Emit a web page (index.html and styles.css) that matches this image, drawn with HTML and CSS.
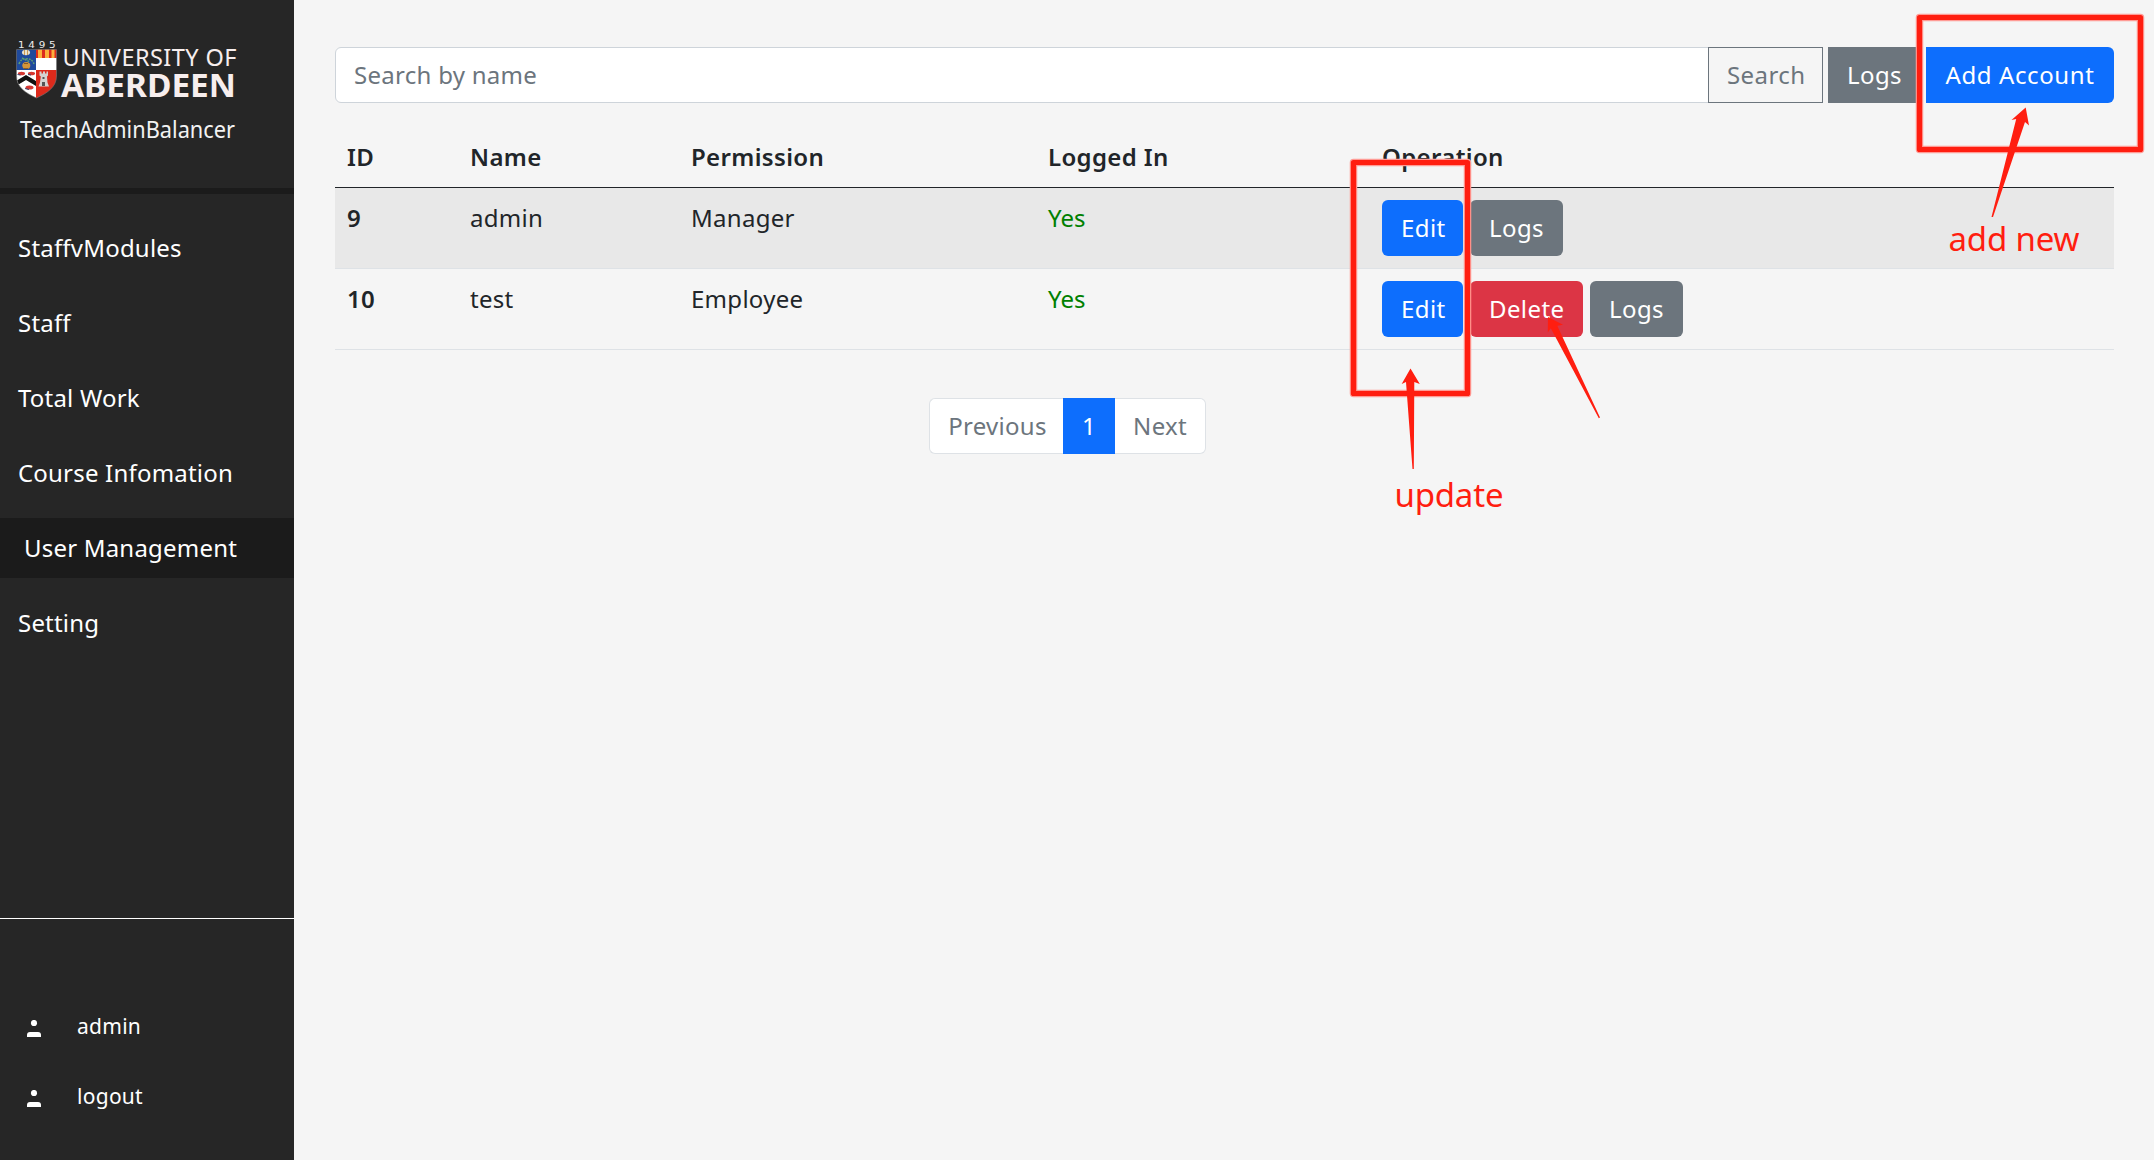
FILE: index.html
```html
<!DOCTYPE html>
<html lang="en">
<head>
<meta charset="utf-8">
<title>TeachAdminBalancer</title>
<link rel="stylesheet" href="styles.css">
</head>
<body>
<div class="app">
  <aside class="sidebar">
    <header class="brand">
      <svg class="logo" width="294" height="188" viewBox="0 0 294 188">
        <defs>
          <clipPath id="shield"><path d="M16.5 49.5h40V76c0 11-9 17-20 22-11-5-20-11-20-22z"/></clipPath>
        </defs>
        <g clip-path="url(#shield)">
          <path fill="#1f4a9c" d="M16 49h20v21H16z"/>
          <path fill="#dc2a1c" d="M36 49h21v9H36z"/>
          <path fill="#fbb03b" d="M38 49h4v9h-4zM45 49h4v9h-4zM51.500 49h3v9h-3z"/>
          <path fill="#fff" d="M36 58h21v12H36zM16 70h20v29H16z"/>
          <path fill="#dc2a1c" d="M36 70h21v29H36z"/>
          <path fill="#111" d="M16 81l10-6 10 6v5l-10-6-10 6z"/>
          <ellipse cx="26" cy="52.500" rx="4" ry="2.800" fill="#e9e2cf"/>
          <path fill="#c89a55" d="M24 50h1v5h-1zM27 50h1v5h-1z"/>
          <path d="M19 64q2-6 7-5 6-1 8 5M22 58l8 4" fill="none" stroke="#5d9c74" stroke-width="1.500" stroke-dasharray="2 1"/>
          <ellipse cx="26.300" cy="65.500" rx="4" ry="3.500" fill="#d4953a"/>
          <path fill="#8a5a22" d="M24 63h4v1h-4zM24 68h4v1h-4z"/>
          <g fill="#d53832"><ellipse cx="21.500" cy="73.500" rx="3.600" ry="1.800"/><ellipse cx="31.500" cy="73.500" rx="3.600" ry="1.800"/><ellipse cx="29.500" cy="87.500" rx="4" ry="2"/></g>
          <path d="M17.500 74.500l3 .5M28 74.500l3 .5M25 88.500l4 1" stroke="#35456f"/>
          <path fill="#d4d2d0" d="M39.500 71.500h2v2h1.500v-2h2v2H46.500v-2h1.500v4l-1 1 .5 6 1.500 4H38.500l1.500-4 .8-6-1.300-1z"/>
          <path fill="#555" d="M42.500 77h2v2h-2zM42 82h3v4h-3z"/>
        </g>
        <path d="M16.500 49.500h40V76c0 11-9 17-20 22-11-5-20-11-20-22z" fill="none" stroke="#777" stroke-width=".6"/>
        <text class="logo-year" transform="translate(18 47.800) scale(1.300 1)" x="0" y="0" textLength="29">1495</text>
        <text class="logo-top" x="62.500" y="66" textLength="174">UNIVERSITY OF</text>
        <text class="logo-name" x="61" y="97" textLength="175" lengthAdjust="spacingAndGlyphs">ABERDEEN</text>
        <text class="logo-app" x="20" y="138" textLength="215" lengthAdjust="spacingAndGlyphs">TeachAdminBalancer</text>
      </svg>
    </header>
    <nav class="nav">
      <a class="nav-item">StaffvModules</a>
      <a class="nav-item">Staff</a>
      <a class="nav-item">Total Work</a>
      <a class="nav-item">Course Infomation</a>
      <a class="nav-item active">User Management</a>
      <a class="nav-item">Setting</a>
    </nav>
    <footer class="account">
      <a class="account-item"><svg width="14" height="17" viewBox="0 0 14 17" fill="#fff"><circle cx="7" cy="3" r="3.100"/><path d="M0 17v-2q0-3 3-3h8q3 0 3 3v2z"/></svg>admin</a>
      <a class="account-item"><svg width="14" height="17" viewBox="0 0 14 17" fill="#fff"><circle cx="7" cy="3" r="3.100"/><path d="M0 17v-2q0-3 3-3h8q3 0 3 3v2z"/></svg>logout</a>
    </footer>
  </aside>
  <main class="content">
    <div class="toolbar">
      <input class="search" type="text" placeholder="Search by name">
      <button class="btn outline">Search</button>
      <button class="btn gray square">Logs</button>
      <button class="btn blue end">Add Account</button>
    </div>
    <table class="users">
      <colgroup><col class="c-id"><col class="c-name"><col class="c-perm"><col class="c-login"><col></colgroup>
      <thead><tr><th>ID</th><th>Name</th><th>Permission</th><th>Logged In</th><th>Operation</th></tr></thead>
      <tbody>
        <tr class="striped"><th>9</th><td>admin</td><td>Manager</td><td class="yes">Yes</td><td><div class="ops"><button class="btn blue edit">Edit</button><button class="btn gray logs">Logs</button></div></td></tr>
        <tr><th>10</th><td>test</td><td>Employee</td><td class="yes">Yes</td><td><div class="ops"><button class="btn blue edit">Edit</button><button class="btn red">Delete</button><button class="btn gray logs">Logs</button></div></td></tr>
      </tbody>
    </table>
    <div class="pagination"><a class="page prev">Previous</a><a class="page current">1</a><a class="page next">Next</a></div>
  </main>
</div>
<svg class="notes" width="2154" height="1160" viewBox="0 0 2154 1160">
  <g fill="none" stroke-linejoin="round">
    <path class="halo" d="M1919.500 17.500h221v132h-221zM1353.500 162.500h114v231h-114z"/>
    <path class="frame" d="M1919.500 17.500h221v132h-221zM1353.500 162.500h114v231h-114z"/>
  </g>
  <g fill="#ff1e10">
    <path d="M2025.700 107.500l3.300 18-4-3.500-32 95h-1.500l24.700-98-4.700 1z"/>
    <path d="M1410.500 368.500l9.300 15.500-5.500-2-.5 87h-1.300l-6.500-87-4.300 2z"/>
    <path d="M1548 317l15 7.800-5.700 1 42.700 91.800-1.200.6-48-90-3 4.300z"/>
    <text class="note" x="1948.500" y="250.500" textLength="131">add new</text>
    <text class="note" x="1394.500" y="507" textLength="109">update</text>
  </g>
</svg>
</body>
</html>
```
FILE: styles.css
```css
* { box-sizing: border-box; }
body {
  margin: 0;
  background: #f5f5f5;
  color: #212529;
  font: 24px/36px "Noto Sans", "Open Sans", sans-serif;
  letter-spacing: .28px;
}
.app { display: flex; height: 1160px; overflow: hidden; }

.sidebar {
  width: 294px;
  flex: none;
  display: flex;
  flex-direction: column;
  background: #262626;
  color: #fff;
}
.brand { height: 194px; border-bottom: 6px solid #1b1b1b; }
.logo { display: block; letter-spacing: 0; }
.logo-year { font: 8px "DejaVu Sans", sans-serif; fill: #eee; }
.logo-top { font: 23.500px "Noto Sans", sans-serif; fill: #f7eeee; }
.logo-name { font: bold 32px "Noto Sans", sans-serif; fill: #f7eeee; }
.logo-app { font: 23px "Noto Sans", sans-serif; fill: #f2f2f2; }
.nav { display: flex; flex-direction: column; gap: 15px; padding-top: 24px; letter-spacing: .2px; }
.nav-item { height: 60px; padding: 12px 18px; white-space: nowrap; }
.nav-item.active { padding-left: 24px; background: #1b1b1b; }
.account {
  height: 242px;
  margin-top: auto;
  padding-top: 89px;
  border-top: 1px solid #fff;
  font-size: 21px;
}
.account-item { display: flex; align-items: center; height: 36px; gap: 36px; margin-bottom: 34px; padding-left: 27px; }
.account-item svg { margin-top: 4px; }

.content { flex: 1; padding: 47px 40px 0 41px; }
.toolbar { display: flex; height: 56px; }
.search {
  width: 1374px;
  padding: 0 18px;
  border: 1px solid #ced4da;
  border-radius: 6px 0 0 6px;
  background: #fff;
  font: inherit;
  letter-spacing: inherit;
}
.search::placeholder { color: #6c757d; opacity: 1; }
.btn {
  height: 56px;
  padding: 9px 18px;
  border: 1px solid transparent;
  border-radius: 6px;
  color: #fff;
  font: inherit;
  letter-spacing: .4px;
  white-space: nowrap;
}
.outline { width: 115px; margin-left: -1px; border-color: #6c757d; border-radius: 0; background: transparent; color: #6c757d; }
.blue { background: #0d6efd; }
.gray { background: #6c757d; }
.red { width: 113px; background: #dc3545; }
.square { width: 93px; margin-left: 5px; border-radius: 0; }
.end { flex: 1; margin-left: 5px; border-radius: 0 6px 6px 0; letter-spacing: .6px; }

.users { width: 1779px; margin-top: 24px; border-collapse: separate; border-spacing: 0; table-layout: fixed; }
.c-id { width: 123px; }
.c-name { width: 221px; }
.c-perm { width: 357px; }
.c-login { width: 334px; }
.users th, .users td { padding: 12px; border-bottom: 1px solid #dee2e6; text-align: left; vertical-align: top; }
.users th { font-weight: 600; letter-spacing: .35px; }
.users thead th { border-color: #212529; }
.striped { background: #e8e8e8; }
.users .yes { color: #008000; letter-spacing: 0; }
.ops { display: flex; gap: 7px; }
.edit { width: 81px; }
.logs { width: 93px; }

.pagination { display: flex; width: 277px; margin: 48px 0 0 594px; }
.page { height: 56px; padding: 10px 0; border: solid #dee2e6; border-width: 1px 0; background: #fff; color: #6c757d; line-height: 34px; text-align: center; }
.prev { width: 134px; padding-left: 2px; border-left-width: 1px; border-radius: 6px 0 0 6px; }
.current { width: 52px; border-color: #0d6efd; background: #0d6efd; color: #fff; }
.next { width: 91px; border-right-width: 1px; border-radius: 0 6px 6px 0; }

.notes { position: absolute; top: 0; left: 0; pointer-events: none; }
.halo { stroke: #ff9b95; stroke-width: 7.5; }
.frame { stroke: #ff1e10; stroke-width: 5.2; }
.note { font: 33px "Noto Sans", sans-serif; letter-spacing: 0; }
```
